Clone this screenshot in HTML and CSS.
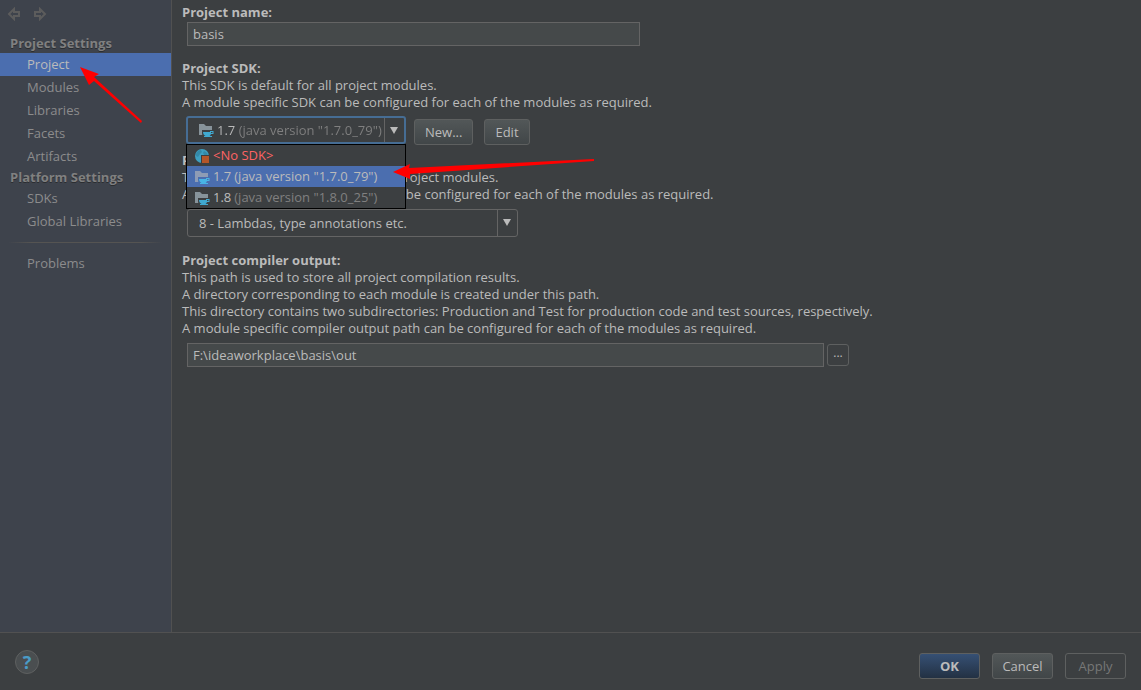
FILE: index.html
```html
<!DOCTYPE html>
<html lang="en">
<head>
    <meta charset="UTF-8">
    <meta name="viewport" content="width=device-width, initial-scale=1.0">
    <title>Project Structure</title>
    <link rel="stylesheet" href="styles.css">
</head>
<body>

<!-- shared icons -->
<svg class="defs" width="0" height="0" aria-hidden="true">
    <symbol id="icon-sdk" viewBox="0 0 16 16">
        <path d="M1 2h5l2 2h6v9H1z" fill="#87939a"/>
        <path d="M4 8h12v5h-3v3H6c-1-1-2-3-2-5z" fill="#3c3f41"/>
        <path d="M5 10h7V9h3.500v3H13c-.5 1-1 2-1.500 2h-4C6 13 5 12 5 10z" fill="#40a9d0"/>
        <path d="M13 10h1.500v1H13z" fill="#3c3f41"/>
        <path d="M6 14h8v1H6z" fill="#40a9d0"/>
    </symbol>
    <symbol id="icon-sdk-active" viewBox="0 0 16 16">
        <path d="M1 2h5l2 2h6v9H1z" fill="#8e9cb5"/>
        <path d="M4 8h12v5h-3v3H6c-1-1-2-3-2-5z" fill="#4b6eaf"/>
        <path d="M5 10h7V9h3.500v3H13c-.5 1-1 2-1.500 2h-4C6 13 5 12 5 10z" fill="#48b4e4"/>
        <path d="M13 10h1.500v1H13z" fill="#4b6eaf"/>
        <path d="M6 14h8v1H6z" fill="#48b4e4"/>
    </symbol>
    <symbol id="icon-no-sdk" viewBox="0 0 16 16">
        <circle cx="8" cy="8" r="7" fill="#3e9fc0"/>
        <path d="M2 6c1-3 3-4 5-4l1 2-2 2-2 3-2-1zM10 3l3 2 1 3h-3l-2-3z" fill="#3489a8"/>
        <path d="M7 7h9v9H7z" fill="#3c3f41"/>
        <path d="M8 8h7v7H8z" fill="#b4562a"/>
    </symbol>
    <symbol id="icon-arrow" viewBox="0 0 14 14">
        <path d="M2 7l5-5v3h5v4H7v3z" fill="none" stroke="#5c5c5c" stroke-width="2"/>
    </symbol>
</svg>

<div class="dialog">
    <aside class="sidebar">
        <div class="toolbar">
            <button class="nav-btn" type="button" aria-label="Back"><svg width="14" height="14"><use href="#icon-arrow"/></svg></button>
            <button class="nav-btn forward" type="button" aria-label="Forward"><svg width="14" height="14"><use href="#icon-arrow"/></svg></button>
        </div>
        <nav>
            <h2>Project Settings</h2>
            <a class="active" href="#project">Project</a>
            <a href="#modules">Modules</a>
            <a href="#libraries">Libraries</a>
            <a href="#facets">Facets</a>
            <a href="#artifacts">Artifacts</a>
            <h2>Platform Settings</h2>
            <a href="#sdks">SDKs</a>
            <a href="#global-libraries">Global Libraries</a>
            <hr>
            <a href="#problems">Problems</a>
        </nav>
        <svg class="pointer pointer-nav" width="64" height="58" viewBox="0 0 64 58" aria-hidden="true">
            <path d="M0 1l19 7-5 3 48 44-1 2L14 15l-5 4z" fill="#ff0000"/>
        </svg>
    </aside>

    <main class="content">
        <section>
            <label class="title" for="projectName">Project name:</label>
            <input class="text-field name-field" id="projectName" type="text" value="basis">
        </section>

        <section>
            <label class="title" for="projectSdk">Project SDK:</label>
            <p>This SDK is default for all project modules.</p>
            <p>A module specific SDK can be configured for each of the modules as required.</p>
            <div class="sdk-row">
                <div class="combo sdk-combo">
                    <svg class="combo-icon" width="16" height="16" aria-hidden="true"><use href="#icon-sdk"/></svg>
                    <select id="projectSdk">
                        <option>1.7 (java version "1.7.0_79")</option>
                    </select>
                    <span class="combo-arrow"></span>
                    <ul class="popup" role="listbox" aria-label="Project SDK">
                        <li class="missing" role="option"><svg width="16" height="16"><use href="#icon-no-sdk"/></svg>&lt;No SDK&gt;</li>
                        <li class="selected" role="option" aria-selected="true"><svg width="16" height="16"><use href="#icon-sdk-active"/></svg>1.7 <span>(java version "1.7.0_79")</span></li>
                        <li role="option"><svg width="16" height="16"><use href="#icon-sdk"/></svg>1.8 <span>(java version "1.8.0_25")</span></li>
                    </ul>
                    <svg class="pointer pointer-sdk" width="204" height="24" viewBox="0 0 204 24" aria-hidden="true">
                        <path d="M0 16l17-8-1 4 185-9v2L17 18v5z" fill="#ff0000"/>
                    </svg>
                </div>
                <button class="btn" type="button">New...</button>
                <button class="btn" type="button">Edit</button>
            </div>
        </section>

        <section class="level-section">
            <label class="title" for="languageLevel">Project language level:</label>
            <p>This language level is default for all project modules.</p>
            <p>A module specific language level can be configured for each of the modules as required.</p>
            <div class="combo level-combo">
                <select id="languageLevel">
                    <option>8 - Lambdas, type annotations etc.</option>
                </select>
                <span class="combo-arrow"></span>
            </div>
        </section>

        <section>
            <label class="title" for="compilerOutput">Project compiler output:</label>
            <p>This path is used to store all project compilation results.</p>
            <p>A directory corresponding to each module is created under this path.</p>
            <p>This directory contains two subdirectories: Production and Test for production code and test sources, respectively.</p>
            <p>A module specific compiler output path can be configured for each of the modules as required.</p>
            <div class="output-row">
                <input class="text-field" id="compilerOutput" type="text" value="F:\ideaworkplace\basis\out">
                <button class="btn browse" type="button" aria-label="Browse">...</button>
            </div>
        </section>
    </main>
</div>

<footer>
    <button class="help" type="button">?</button>
    <button class="btn primary" type="button">OK</button>
    <button class="btn" type="button">Cancel</button>
    <button class="btn" type="button" disabled>Apply</button>
</footer>

</body>
</html>
```
FILE: styles.css
```css
* {
    box-sizing: border-box;
}
body {
    margin: 0;
    min-height: 100vh;
    display: flex;
    flex-direction: column;
    background-color: #3c3f41;
    color: #bbbbbb;
    font-family: "Open Sans", "Noto Sans", sans-serif;
    font-size: 13px;
    line-height: 17px;
}
input, select, button {
    font: inherit;
    color: inherit;
}
.defs {
    position: absolute;
}
.dialog {
    flex: 1;
    display: flex;
}
.sidebar {
    position: relative;
    width: 172px;
    flex-shrink: 0;
    background-color: #3e434c;
    border-right: 1px solid #515151;
}
.toolbar {
    display: flex;
    gap: 12px;
    height: 34px;
    padding: 7px;
}
.nav-btn {
    width: 14px;
    height: 14px;
    padding: 0;
    border: none;
    background: none;
}
.nav-btn svg {
    display: block;
}
.forward {
    transform: scaleX(-1);
}
.sidebar h2 {
    margin: 0;
    padding-left: 10px;
    font-size: 13px;
    line-height: 19px;
    color: #808080;
    text-shadow: 0 1px 0 #2b2d30;
}
.sidebar a {
    display: block;
    padding-left: 27px;
    line-height: 23px;
    color: #8c8c8c;
    text-decoration: none;
}
.sidebar a.active {
    background-color: #4b6eaf;
    color: #bbbbbb;
}
.sidebar hr {
    height: 1px;
    margin: 9px 8px;
    border: none;
    background: linear-gradient(to right, transparent, #555452 15%, #555452 85%, transparent);
}
.pointer {
    position: absolute;
    z-index: 3;
    pointer-events: none;
}
.pointer-nav {
    left: 80px;
    top: 66px;
}
.pointer-sdk {
    left: 205px;
    top: 38px;
}
.content {
    flex: 1;
    padding: 4px 10px;
}
.content section + section {
    margin-top: 14px;
}
.content .level-section.level-section {
    margin-top: 7px;
    padding-bottom: 1px;
}
.title {
    display: block;
    font-weight: bold;
}
.content p {
    margin: 0;
}
.text-field {
    height: 24px;
    padding: 0 5px;
    border: 1px solid #646464;
    background-color: #45494a;
    outline: none;
}
.name-field {
    display: block;
    width: 453px;
    margin: 1px 5px 0;
}
.sdk-row {
    display: flex;
    align-items: flex-start;
    gap: 8px;
    height: 29px;
    margin: 5px 4px 0;
}
.sdk-row .btn {
    align-self: flex-end;
    padding: 0 10px;
}
.sdk-row .btn + .btn {
    margin-left: 3px;
}
.combo {
    position: relative;
    display: flex;
    align-items: center;
    height: 28px;
    border: 1px solid #646464;
    border-radius: 3px;
}
.combo select {
    flex: 1;
    height: 100%;
    padding: 0 20px 0 11px;
    appearance: none;
    border: none;
    background: none;
    outline: none;
}
.combo-arrow {
    position: absolute;
    right: 0;
    top: 0;
    bottom: 0;
    width: 20px;
    border-left: 1px solid #646464;
    pointer-events: none;
}
.combo-arrow::after {
    content: "";
    position: absolute;
    left: 5px;
    top: 9px;
    border: 4px solid transparent;
    border-top: 7px solid #bbbbbb;
    border-bottom: none;
}
.sdk-combo {
    width: 220px;
    border: 2px solid #466d94;
}
.combo-icon {
    margin-left: 10px;
}
/* version number is lighter than the details after it */
.sdk-combo select {
    padding-left: 3px;
    background: linear-gradient(to right, #bbbbbb 24px, #808080 24px);
    -webkit-background-clip: text;
    background-clip: text;
    -webkit-text-fill-color: transparent;
}
.popup {
    position: absolute;
    z-index: 2;
    left: -2px;
    top: 26px;
    width: 220px;
    margin: 0;
    padding: 0;
    border: 1px solid #000000;
    background-color: #3c3f41;
    list-style: none;
}
.popup li {
    display: flex;
    align-items: center;
    gap: 3px;
    height: 21px;
    padding-left: 7px;
}
.popup span {
    color: #808080;
}
.popup .missing {
    color: #ff6464;
}
.popup .selected, .popup .selected span {
    background-color: #4b6eaf;
    color: #bbbbbb;
}
.level-combo {
    width: 331px;
    margin: 6px 5px 0;
}
.output-row {
    display: flex;
    align-items: center;
    gap: 3px;
    margin: 6px 5px 0;
}
.output-row .text-field {
    width: 637px;
}
.btn {
    height: 26px;
    border: 1px solid #5e6060;
    border-radius: 3px;
    background: linear-gradient(#525758, #414648);
}
.btn.browse {
    width: 22px;
    height: 22px;
    padding: 0 0 4px;
    background: none;
    font-size: 12px;
    line-height: 12px;
}
footer {
    display: flex;
    align-items: center;
    gap: 12px;
    height: 58px;
    padding: 9px 15px 0;
    border-top: 1px solid #515151;
}
footer .btn {
    width: 61px;
    padding: 0;
}
.btn.primary {
    background: linear-gradient(#365074, #233143);
    font-weight: bold;
}
.btn:disabled {
    background: none;
    color: #777777;
}
.help {
    width: 24px;
    height: 24px;
    margin-right: auto;
    margin-bottom: 9px;
    padding: 0;
    border: 1px solid #5e6060;
    border-radius: 50%;
    background-color: #4a4e50;
    color: #4a9cc7;
    font-size: 18px;
    font-weight: bold;
    line-height: 20px;
}
```
